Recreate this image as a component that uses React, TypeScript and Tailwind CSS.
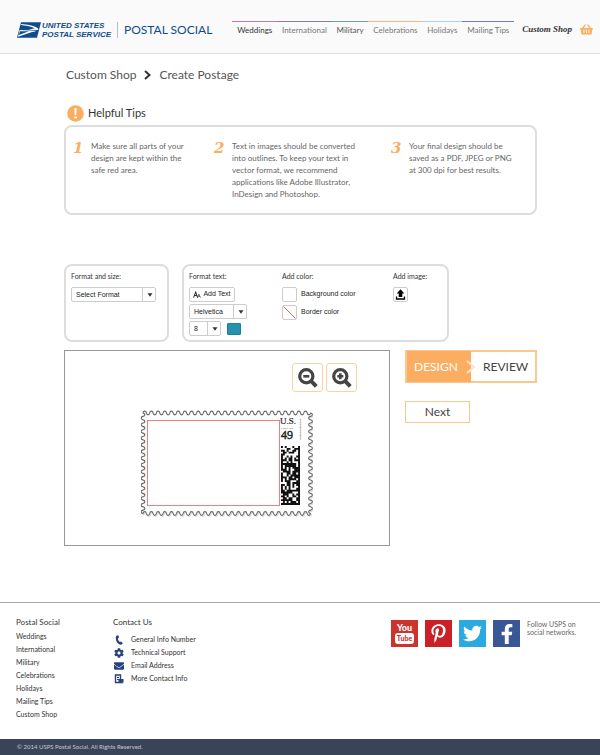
import React from "react";
import {
  FaCog,
  FaEnvelope,
  FaFacebookF,
  FaPinterestP,
  FaShoppingBasket,
  FaTwitter,
} from "react-icons/fa";

const navItems = [
  { label: "Weddings", look: "border-[#c27aa6] text-[#333333]" },
  { label: "International", look: "border-[#8c7f96] text-[#777777]" },
  { label: "Military", look: "border-[#6fa09c] text-[#555555]" },
  { label: "Celebrations", look: "border-[#fbb676] text-[#777777]" },
  { label: "Holidays", look: "border-[#a9d3e3] text-[#777777]" },
  { label: "Mailing Tips", look: "border-[#7781a3] text-[#777777]" },
];

const footerLinks = [
  "Weddings",
  "International",
  "Military",
  "Celebrations",
  "Holidays",
  "Mailing Tips",
  "Custom Shop",
];

function Eagle() {
  return (
    <svg viewBox="0 0 72 46" className="h-4 w-6 shrink-0" aria-hidden="true">
      <path d="M12 0H72L60 46H0Z" fill="#0f4c8c" />
      <path d="M13 5C30 6 50 10 60 16C64 18 65 21 63 23L34 22C44 20 50 19 54 18C40 12 26 9 12 8Z" fill="#fff" />
      <path d="M8 23L57 25C54 29 48 28 43 30L3 43Z" fill="#fff" />
      <path d="M9 27L36 27L5 38Z" fill="#0f4c8c" />
    </svg>
  );
}

function Header() {
  return (
    <header className="flex h-[54px] items-start border-b border-[#dddddd] bg-[#fafafa] pl-[17px] pr-[7px]">
      <a href="#home" className="mt-[21px] flex shrink-0 items-center text-[#0f4c8c]">
        <Eagle />
        <span className="ml-px w-[72px] whitespace-nowrap font-['Liberation_Sans',sans-serif] text-[8px] font-bold italic leading-[9px]">
          UNITED STATES
          <br />
          POSTAL SERVICE
        </span>
        <span className="ml-[3px] h-4 border-l border-[#bbbbbb] pl-[6px] font-['Lato',sans-serif] text-[12px] leading-4 whitespace-nowrap">
          POSTAL SOCIAL
        </span>
      </a>
      <nav className="ml-5 mt-[21px] flex flex-1 font-['Liberation_Sans_Narrow','Lato',sans-serif] text-[8px] leading-4">
        {navItems.map((n) => (
          <a key={n.label} href="#nav" className={"grow border-t whitespace-nowrap text-center " + n.look}>
            {n.label}
          </a>
        ))}
      </nav>
      <a
        href="#shop"
        className="ml-2 mt-[21px] font-['Liberation_Serif',serif] text-[9px] font-bold italic leading-4 whitespace-nowrap text-[#333333]"
      >
        Custom Shop
      </a>
      <a href="#basket" aria-label="Basket" className="ml-2 mt-[23px] text-[#fbae62]">
        <FaShoppingBasket size={13} />
      </a>
    </header>
  );
}

function Tip({ n, children, look }: { n: string; children: React.ReactNode; look: string }) {
  return (
    <li className={"flex " + look}>
      <span className="w-[18px] shrink-0 font-['DejaVu_Serif',serif] text-[15px] font-bold italic leading-4 text-[#fbae62]">
        {n}
      </span>
      <p className="whitespace-nowrap">{children}</p>
    </li>
  );
}

function Select({ label, value, look }: { label: string; value: string; look: string }) {
  return (
    <span className={"relative block h-[15px] " + look}>
      <select
        aria-label={label}
        className="block h-full w-full appearance-none rounded-[2px] border border-[#cccccc] bg-white pl-1 font-['Liberation_Sans',sans-serif] text-[7px] leading-3 text-[#222222]"
      >
        <option>{value}</option>
      </select>
      <span className="pointer-events-none absolute inset-y-0 right-0 flex w-[14px] items-center justify-center border-l border-[#cccccc]">
        <svg viewBox="0 0 6 4" className="h-1 w-[6px]" aria-hidden="true">
          <path d="M0.5 0.3H5.5L3 3.7Z" fill="#333" />
        </svg>
      </span>
    </span>
  );
}

function Magnifier({ plus }: { plus?: boolean }) {
  return (
    <svg viewBox="0 0 20 20" className="h-5 w-5" fill="none" stroke="#444" aria-hidden="true">
      <circle cx="8.3" cy="8.3" r="6.6" strokeWidth="3.2" />
      <path d="M13.2 13.2L18.3 18.3" strokeWidth="4" />
      <path d={plus ? "M5.3 8.3H11.3M8.3 5.3V11.3" : "M5.3 8.3H11.3"} strokeWidth="2.6" />
    </svg>
  );
}

// Scalloped outline: each tooth is one bump out and one bump in.
function stampOutline() {
  const across = 25;
  const down = 15;
  const h = 3.35;
  let d = "M2 3";
  const tooth = (x: number, y: number) => {
    const nx = -y;
    const ny = x;
    const a = 2.5;
    d += `c${x * 0.4 - nx * a} ${y * 0.4 - ny * a} ${x * (h - 0.4) - nx * a} ${y * (h - 0.4) - ny * a} ${x * h} ${y * h}`;
    d += `c${x * 0.4 + nx * a} ${y * 0.4 + ny * a} ${x * (h - 0.4) + nx * a} ${y * (h - 0.4) + ny * a} ${x * h} ${y * h}`;
  };
  for (let i = 0; i < across; i++) tooth(1, 0);
  for (let i = 0; i < down; i++) tooth(0, 1);
  for (let i = 0; i < across; i++) tooth(-1, 0);
  for (let i = 0; i < down; i++) tooth(0, -1);
  return d + "Z";
}

function codeCells() {
  let seed = 77;
  let d = "";
  for (let r = 0; r < 31; r++) {
    for (let c = 0; c < 10; c++) {
      seed = (seed * 1103515245 + 12345) % 2147483648;
      const on = c === 9 || r === 30 || (c === 0 && r % 2 === 0) || (seed >> 12) % 100 < 60;
      if (on) d += `M${(140 + c * 1.9).toFixed(1)} ${(36 + r * 1.9).toFixed(1)}h1.9v1.9h-1.9Z`;
    }
  }
  return d;
}

function Stamp() {
  return (
    <svg viewBox="0 0 172 107" className="h-[107px] w-[172px]" role="img" aria-label="Postage stamp">
      <path d={stampOutline()} transform="translate(1 1)" fill="none" stroke="#ccc" />
      <path d={stampOutline()} fill="#fdfdfd" stroke="#666" strokeWidth="1.1" />
      <rect x="6.5" y="10.5" width="132" height="85" fill="#fff" stroke="#f08080" />
      <text x="139" y="14" fontSize="9" fontFamily="Liberation Serif" stroke="#222" strokeWidth="0.2" fill="#222">U.S.</text>
      <text x="140" y="18.5" fontSize="2.5" fontFamily="Liberation Sans" fill="#777">POSTAGE</text>
      <text x="140" y="29" fontSize="12" fontFamily="Liberation Serif" stroke="#222" strokeWidth="0.4" fill="#222">49</text>
      <path d="M159.5 9V30" stroke="#aaa" strokeWidth="1.4" strokeDasharray="1 0.6" />
      <path d={codeCells()} fill="#111" />
    </svg>
  );
}

function Tools() {
  const label = "block h-[11px] leading-[11px] whitespace-nowrap";
  return (
    <section className="mt-[49px] flex gap-[13px] font-['Lato',sans-serif] text-[7px] text-[#333333]">
      <div className="h-[78px] w-[105px] rounded-lg border-2 border-[#dddddd] pl-[5px] pt-[5px]">
        <span className={label}>Format and size:</span>
        <div className="mt-[5px]">
          <Select label="Format and size" value="Select Format" look="w-[85px]" />
        </div>
      </div>
      <div className="flex h-[78px] w-[267px] rounded-lg border-2 border-[#dddddd] pl-[5px] pt-[5px]">
        <div className="w-[93px]">
          <span className={label}>Format text:</span>
          <div className="mt-[5px] flex flex-col items-start gap-[2px]">
            <button className="flex h-[15px] w-[46px] items-center justify-center gap-[2px] rounded-[2px] border border-[#cccccc] font-['Liberation_Sans',sans-serif] text-[7px] whitespace-nowrap text-[#222222]">
              <svg viewBox="0 0 9 7" className="h-[7px] w-2" fill="none" stroke="#333" aria-hidden="true">
                <path d="M0.6 7L3 0.8L5.2 7M1.5 4.6H4.4" strokeWidth="1.2" />
                <path d="M5 7L6.6 3.2L8.4 7M5.7 5.6H7.6" strokeWidth="0.8" />
              </svg>
              Add Text
            </button>
            <Select label="Font" value="Helvetica" look="w-[58px]" />
            <div className="flex items-center gap-[6px]">
              <Select label="Font size" value="8" look="w-8" />
              <button aria-label="Text color" className="h-3 w-[14px] rounded-[1px] border border-[#1f7f96] bg-[#2592ab]" />
            </div>
          </div>
        </div>
        <div className="w-[111px]">
          <span className={label}>Add color:</span>
          <div className="mt-[5px] flex flex-col gap-[3px] font-['Liberation_Sans',sans-serif] text-[#222222]">
            <label className="flex items-center gap-1 whitespace-nowrap">
              <button aria-label="Background color" className="h-[15px] w-[15px] rounded-[2px] border border-[#cccccc] bg-white" />
              Background color
            </label>
            <label className="flex items-center gap-1 whitespace-nowrap">
              <button aria-label="Border color" className="h-[15px] w-[15px] rounded-[2px] border border-[#cccccc] bg-white">
                <svg viewBox="0 0 13 13" className="h-[13px] w-[13px]" aria-hidden="true">
                  <path d="M0.5 0.5L12.5 12.5" stroke="#ef5a5a" />
                </svg>
              </button>
              Border color
            </label>
          </div>
        </div>
        <div>
          <span className={label}>Add image:</span>
          <button aria-label="Upload image" className="mt-[5px] flex h-[15px] w-[15px] items-center justify-center rounded-[2px] border border-[#cccccc]">
            <svg viewBox="0 0 11 11" className="h-[11px] w-[11px]" aria-hidden="true">
              <path d="M5.5 0.3L9.3 4.6H7.3V8H3.7V4.6H1.7Z" />
              <path d="M1.5 7.5V10H9.5V7.5" fill="none" stroke="#000" strokeWidth="1.3" />
            </svg>
          </button>
        </div>
      </div>
    </section>
  );
}

function Workspace() {
  return (
    <section className="mt-2 flex gap-[15px] font-['Lato',sans-serif]">
      <div className="h-[196px] flex-1 border border-[#999999]">
        <div className="mr-8 mt-3 flex justify-end gap-[3px]">
          <button aria-label="Zoom out" className="flex h-[29px] w-[31px] items-center justify-center rounded-[3px] border border-[#fdd0a0]">
            <Magnifier />
          </button>
          <button aria-label="Zoom in" className="flex h-[29px] w-[31px] items-center justify-center rounded-[3px] border border-[#fdd0a0]">
            <Magnifier plus />
          </button>
        </div>
        <div className="mt-[18px] flex justify-center">
          <Stamp />
        </div>
      </div>
      <div className="w-[132px]">
        <div className="flex h-[33px] items-center border-2 border-[#fdc68c] text-[12px] leading-[29px]">
          <button className="flex h-[31px] w-16 shrink-0 items-center bg-[#fbae62] pl-[7px] text-white">
            DESIGN
          </button>
          <svg viewBox="0 0 10 14" className="-ml-[5px] h-[14px] w-[10px] shrink-0" fill="none" aria-hidden="true">
            <path d="M1 1L8 7L1 13" stroke="#fde3c8" strokeWidth="2" />
          </svg>
          <button className="pl-[7px] text-[#444444]">REVIEW</button>
        </div>
        <button className="mt-[18px] block h-[22px] w-[65px] border border-[#fdc68c] text-[12px] leading-5 text-[#444444]">
          Next
        </button>
      </div>
    </section>
  );
}

function PhoneIcon() {
  return (
    <svg viewBox="0 0 10 10" className="h-[10px] w-[10px]" fill="#27427c" aria-hidden="true">
      <path d="M2.2 0.7L4.3 0.3L5 2.8L3.8 3.6C4.1 5 4.8 6.2 5.8 7L7.2 6.5L8.8 8.3L7.3 9.8C3.5 9.8 0.7 4.6 2.2 0.7Z" />
    </svg>
  );
}

function MoreIcon() {
  return (
    <svg viewBox="0 0 10 10" className="h-[10px] w-[10px]" aria-hidden="true">
      <path d="M1.5 1H6.5V8.5H1.5Z" fill="#fff" stroke="#27427c" strokeWidth="1.4" />
      <path d="M3 3.5H5M3 5.5H5" stroke="#27427c" />
      <path d="M4.5 5H9.5V8.5H8.5V10L6.5 8.5H4.5Z" fill="#27427c" />
    </svg>
  );
}

const contacts = [
  { label: "General Info Number", icon: <PhoneIcon /> },
  { label: "Technical Support", icon: <FaCog size={10} /> },
  { label: "Email Address", icon: <FaEnvelope size={10} /> },
  { label: "More Contact Info", icon: <MoreIcon /> },
];

function Footer() {
  const tile = "flex h-[27px] w-[27px] items-center justify-center text-white";
  return (
    <footer className="mt-14 font-['Lato',sans-serif] text-[#333333]">
      <div className="flex h-[137px] items-start border-t border-[#aaaaaa] px-4 pt-[13px] text-[7px] leading-[13px]">
        <div className="w-[97px]">
          <h2 className="text-[8px]">Postal Social</h2>
          <ul className="mt-px">
            {footerLinks.map((l) => (
              <li key={l}>
                <a href="#link">{l}</a>
              </li>
            ))}
          </ul>
        </div>
        <div>
          <h2 className="text-[8px]">Contact Us</h2>
          <ul className="mt-1">
            {contacts.map((c) => (
              <li key={c.label}>
                <a href="#contact" className="flex items-center">
                  <span className="flex w-[18px] pl-px text-[#27427c]">{c.icon}</span>
                  {c.label}
                </a>
              </li>
            ))}
          </ul>
        </div>
        <div className="ml-auto mt-1 flex gap-[7px]">
          <a href="#youtube" aria-label="YouTube" className={tile + " flex-col bg-[#cd332d] font-['Lato',sans-serif] font-black"}>
            <span className="text-[9px] leading-[10px]">You</span>
            <span className="rounded-[3px] bg-white px-[2px] text-[7px] leading-[11px] text-[#cd332d]">Tube</span>
          </a>
          <a href="#pinterest" aria-label="Pinterest" className={tile + " bg-[#cb2027]"}>
            <FaPinterestP size={19} />
          </a>
          <a href="#twitter" aria-label="Twitter" className={tile + " bg-[#2ba9e1]"}>
            <FaTwitter size={19} />
          </a>
          <a href="#facebook" aria-label="Facebook" className={tile + " bg-[#3a5795]"}>
            <FaFacebookF size={20} />
          </a>
          <p className="w-[57px] whitespace-nowrap leading-2 text-[#666666]">
            Follow USPS on
            <br />
            social networks.
          </p>
        </div>
      </div>
      <div className="h-4 bg-[#3a4459] pl-[17px] text-[6px] leading-4 text-[#c5c9d2]">
        © 2014 USPS Postal Social. All Rights Reserved.
      </div>
    </footer>
  );
}

export default function App() {
  return (
    <div className="bg-white">
      <Header />
      <main className="pl-16 pr-[63px] font-['Lato',sans-serif]">
        <div className="mt-3 flex items-center text-[12px] leading-[18px] text-[#555555]">
          <a href="#custom" className="pl-[2px]">Custom Shop</a>
          <svg viewBox="0 0 7 10" className="mx-2 h-[10px] w-[7px]" fill="none" aria-hidden="true">
            <path d="M1 1L5.5 5L1 9" stroke="#333" strokeWidth="2" />
          </svg>
          <h1>Create Postage</h1>
        </div>
        <div className="mt-5 flex h-[18px] items-center gap-[4px] pl-[3px]">
          <svg viewBox="0 0 17 17" className="h-[17px] w-[17px]" aria-hidden="true">
            <circle cx="8.5" cy="8.5" r="8.3" fill="#fbae62" />
            <path d="M7.2 3.2H9.8L9.2 10H7.8Z" fill="#fff" />
            <circle cx="8.5" cy="12.5" r="1.3" fill="#fff" />
          </svg>
          <h2 className="text-[11px] text-[#333333]">Helpful Tips</h2>
        </div>
        <ol className="mt-[3px] flex h-[90px] rounded-lg border-2 border-[#dddddd] pl-[7px] pt-[13px] text-[8px] leading-[12px] text-[#666666]">
          <Tip n="1" look="w-[141px]">
            Make sure all parts of your
            <br />
            design are kept within the
            <br />
            safe red area.
          </Tip>
          <Tip n="2" look="w-[177px]">
            Text in images should be converted
            <br />
            into outlines. To keep your text in
            <br />
            vector format, we recommend
            <br />
            applications like Adobe Illustrator,
            <br />
            InDesign and Photoshop.
          </Tip>
          <Tip n="3" look="">
            Your final design should be
            <br />
            saved as a PDF, JPEG or PNG
            <br />
            at 300 dpi for best results.
          </Tip>
        </ol>
        <Tools />
        <Workspace />
      </main>
      <Footer />
    </div>
  );
}
